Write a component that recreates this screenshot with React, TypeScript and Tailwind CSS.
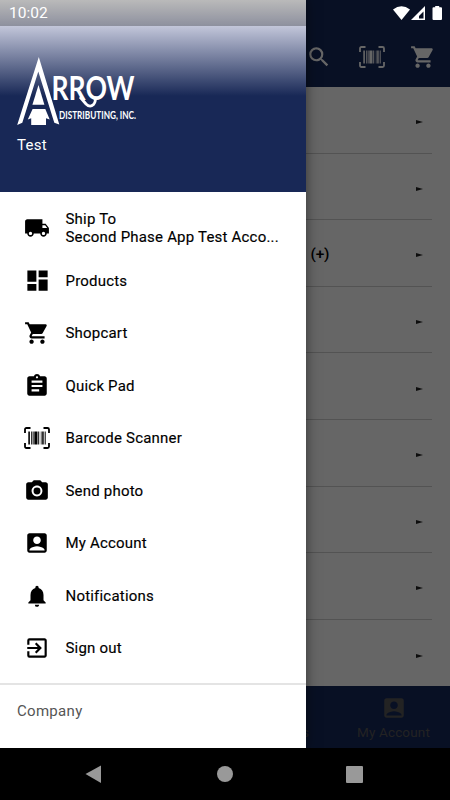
import type { ReactNode } from 'react';
import {
  MdAccountBox,
  MdAssignment,
  MdCameraAlt,
  MdDashboard,
  MdExitToApp,
  MdLocalShipping,
  MdNotifications,
  MdSearch,
  MdShoppingCart,
} from 'react-icons/md';

interface MenuItem {
  label: string;
  detail?: string;
  icon: ReactNode;
}

const menuItems: MenuItem[] = [
  { label: 'Ship To', detail: 'Second Phase App Test Acco...', icon: <MdLocalShipping size={26} /> },
  { label: 'Products', icon: <MdDashboard size={27} /> },
  { label: 'Shopcart', icon: <MdShoppingCart size={26} /> },
  { label: 'Quick Pad', icon: <MdAssignment size={26} /> },
  { label: 'Barcode Scanner', icon: <BarcodeIcon /> },
  { label: 'Send photo', icon: <MdCameraAlt size={26} /> },
  { label: 'My Account', icon: <MdAccountBox size={26} /> },
  { label: 'Notifications', icon: <MdNotifications size={26} /> },
  { label: 'Sign out', icon: <MdExitToApp size={26} /> },
];

const listRows = ['', '', '(+)', '', '', '', '', '', ''];

function BarcodeIcon() {
  return (
    <svg width="26" height="22" viewBox="0 0 26 22" className="shrink-0">
      <path
        d="M1 6V2.5Q1 1 2.5 1H6.5M19.5 1H23.5Q25 1 25 2.5V6M25 16V19.5Q25 21 23.5 21H19.5M6.5 21H2.5Q1 21 1 19.5V16"
        fill="none"
        stroke="currentColor"
        strokeWidth="1.8"
      />
      <g fill="currentColor">
        <rect x="4.3" y="4.5" width="1.6" height="13" />
        <rect x="7" y="4.5" width="0.8" height="13" />
        <rect x="8.6" y="4.5" width="1" height="13" />
        <rect x="10.3" y="4.5" width="3.2" height="13" />
        <rect x="14.2" y="4.5" width="1" height="13" />
        <rect x="16.8" y="4.5" width="0.7" height="13" />
        <rect x="18.2" y="4.5" width="1.5" height="13" />
        <rect x="20.7" y="4.5" width="1" height="13" />
      </g>
    </svg>
  );
}

function Logo() {
  return (
    <svg width="124" height="70" viewBox="17 56 124 70" className="block overflow-visible" fill="#fff">
      {/* Arrowhead emblem */}
      <path d="M38.8 57L59.3 124.6L54.3 122.8L38.3 71.5L22.3 122.8L17.2 125Z" />
      <path d="M38.5 85L44.4 104.8H32.4Z" />
      <path d="M32.6 109H45.3L49.7 119.5L46 118.3V125H31.2V118.3L27.8 119.5Z" />
      <text
        x="51.5"
        y="99.500"
        fontSize="32.500"
        textLength="83"
        lengthAdjust="spacingAndGlyphs"
        fontFamily="Lato, sans-serif"
        fontWeight="700"
      >
        RROW
      </text>
      {/* Loop under the wordmark */}
      <path d="M80 97L86 104Q90 108 93.500 104.500Q96.500 101 94.500 97" fill="none" stroke="#fff" strokeWidth="2.8" />
      <text
        x="59"
        y="119"
        fontSize="11"
        textLength="77"
        lengthAdjust="spacingAndGlyphs"
        fontFamily="Lato, sans-serif"
        fontWeight="700"
      >
        DISTRIBUTING, INC.
      </text>
    </svg>
  );
}

function StatusIcons() {
  return (
    <svg width="50" height="14" viewBox="0 0 50 14" className="block" fill="#fff">
      <path d="M0 3.500Q8.500 -3.200 17 3.500L8.500 14Z" />
      <path d="M32 0V14H18Z" />
      <path d="M30.500 5.500V12.500H26V10Z" fill="#091023" />
      <path d="M42.200 0H46.200V1.300H48Q49 1.300 49 2.300V13Q49 14 48 14H40.500Q39.500 14 39.500 13V2.300Q39.500 1.300 40.500 1.300H42.200Z" />
    </svg>
  );
}

function MainScreen() {
  return (
    <div className="flex h-[748px] flex-col bg-white">
      <header className="flex h-[87px] shrink-0 items-end justify-end bg-[#16285a] pr-[14px] pb-[17px] text-white">
        <div className="flex items-center">
          <MdSearch size={26} className="mr-[27px]" />
          <BarcodeIcon />
          <MdShoppingCart size={26} className="ml-[25px]" />
        </div>
      </header>
      <main className="flex-1 px-[18px]">
        {listRows.map((row, index) => (
          <div
            key={index}
            className="flex h-[66.6px] items-center justify-between border-b border-[#d0d0d0] pr-[9px] pl-[292.500px] last:border-b-0"
          >
            <span className="pt-[4px] text-[15.5px] font-medium tracking-[-0.2px] text-black">{row}</span>
            <svg width="7" height="4" viewBox="0 0 7 4" className="mt-[5px]">
              <path d="M0 0L7 2L0 4Z" fill="#222" />
            </svg>
          </div>
        ))}
      </main>
      <nav className="flex h-[62px] shrink-0 justify-end bg-[#16285a] text-[#575757]">
        <span className="pt-[37px] pr-[28px] text-[13.5px] leading-[18px]">s</span>
        <div className="flex w-[113px] flex-col items-center pt-[9px]">
          <MdAccountBox size={26} />
          <span className="mt-[2px] text-[13.5px] leading-[18px] tracking-[0.15px]">My Account</span>
        </div>
      </nav>
    </div>
  );
}

function Drawer() {
  return (
    <aside className="absolute top-0 left-0 flex h-[748px] w-[306px] flex-col bg-white shadow-[0_0_12px_rgba(0,0,0,0.5)]">
      <div className="h-[192px] shrink-0 bg-[linear-gradient(to_bottom,#ffffff_0px,#c0c4d8_27px,#182856_96px)]">
        <div className="flex h-[26px] items-center bg-black/27 pl-[9px] text-[15.5px] text-white">
          <span className="pt-[2px]">10:02</span>
        </div>
        <div className="pt-[30px] pl-[17px]">
          <Logo />
          <p className="mt-[9px] text-[15px] leading-[20px] tracking-[0.3px] text-white">Test</p>
        </div>
      </div>
      <ul className="flex-1 pt-[10px]">
        {menuItems.map((item) => (
          <li key={item.label} className="flex h-[52.500px] items-center">
            <div className="flex w-[74px] shrink-0 justify-center">{item.icon}</div>
            <div className="-ml-[8.500px] text-[15px] leading-[18px] tracking-[0.2px] whitespace-nowrap text-black [-webkit-text-stroke:0.15px_black]">
              <p>{item.label}</p>
              {item.detail && <p>{item.detail}</p>}
            </div>
          </li>
        ))}
      </ul>
      <div className="h-[65px] shrink-0 border-t-2 border-[#e4e4e4] pt-[16px] pl-[17px] text-[15px] leading-[20px] tracking-[0.3px] text-[#555]">
        Company
      </div>
    </aside>
  );
}

function SystemNav() {
  return (
    <div className="flex h-[52px] items-center justify-center gap-[113px] bg-black text-[#999]">
      <svg width="17" height="19" viewBox="0 0 17 19" fill="currentColor" className="mr-[2px] -ml-[2px]">
        <path d="M0.500 9L16 0.500V18Z" />
      </svg>
      <div className="size-[16px] rounded-full bg-current" />
      <div className="size-[17px] rounded-[1px] bg-current" />
    </div>
  );
}

export default function App() {
  return (
    <div className="relative h-[800px] w-[450px] overflow-hidden font-[Roboto,sans-serif]">
      <MainScreen />
      <SystemNav />
      <div className="absolute top-0 left-0 h-[748px] w-full bg-black/60" />
      <Drawer />
      <div className="absolute top-[6px] right-[7px]">
        <StatusIcons />
      </div>
    </div>
  );
}
